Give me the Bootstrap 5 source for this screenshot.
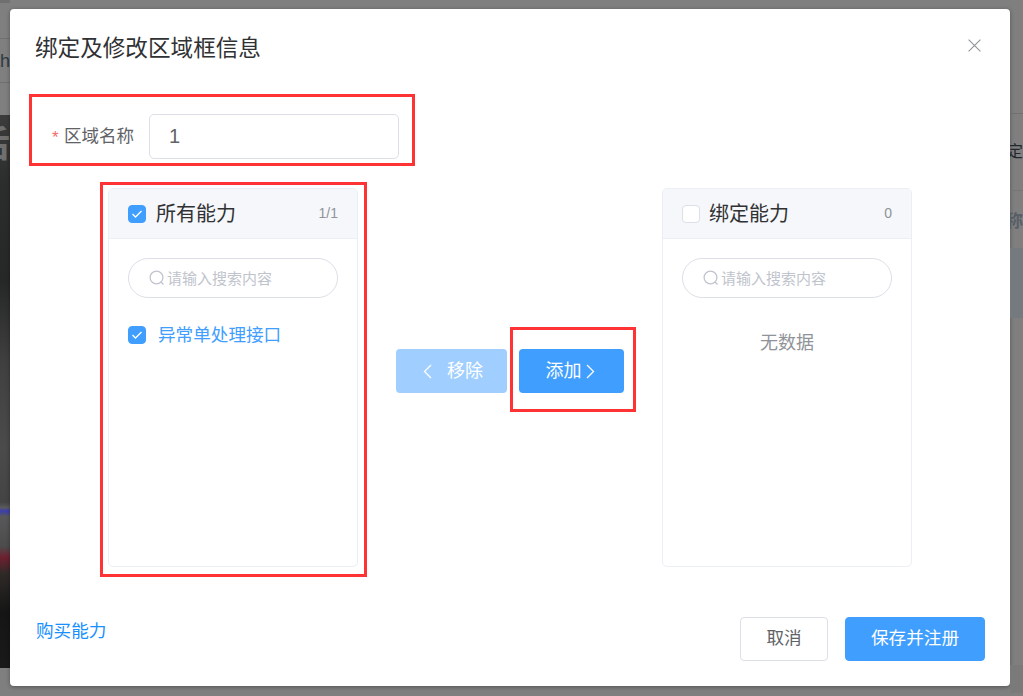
<!DOCTYPE html>
<html lang="zh-CN">
<head>
<meta charset="utf-8">
<title>绑定及修改区域框信息</title>
<link href="https://cdn.jsdelivr.net/npm/bootstrap@5.3.0/dist/css/bootstrap.min.css" rel="stylesheet">
<style>
html,body{height:696px;overflow:hidden}
body{background:#7f7f7f;font-family:"Liberation Sans","Noto Sans CJK SC",sans-serif;color:#606266}
.stage{height:696px}
.strip-l{width:10px;overflow:hidden}
.strip-r{width:13px;overflow:hidden;padding-top:0}
.band-top{height:3px;background:#6f6f6f}
.bg-row{white-space:nowrap;overflow:hidden;border-bottom:1px solid #707070;font-size:18px;line-height:1}
.row-a{height:36px}
.row-th{height:44px;color:#2d3a44}
.row-c{height:32px;border-bottom:0}
.shot{height:553px;background:linear-gradient(180deg,#3c3c3c 0,#2c2e2d 12%,#262827 30%,#3f403f 45%,#4a4b4a 60%,#444 70%,#5a5a5f 71%,#3d3dae 71.6%,#58585a 72.6%,#4c4c4c 78%,#6e2030 80%,#2e2a28 83%,#151515 90%,#1a1a1a 100%);color:#6f6f6f;font-size:36px;font-weight:700;line-height:1;overflow:hidden;padding-top:12px;white-space:nowrap}
.r-a{height:114px}
.r-b{height:77px;color:#23282c;font-size:16px;margin-left:-3px;padding-left:0}
.r-b,.r-c{border-bottom:1px solid #757575}
.r-c{height:57px;color:#575d65;font-size:17px;font-weight:700;margin-left:-4px;border-bottom:0;padding-top:4px}
.r-d{height:70px;background:#747a7e}
.r-e{height:347px}
.r-f{height:28px;background:#7a7a7a}
.dialog{width:1000px;margin-top:9px;height:677px;background:#fff;border-radius:4px;box-shadow:0 1px 4px rgba(0,0,0,.35)}
.dlg-head{height:85px;padding:4px 29px 9px 25px}
.dlg-title{font-size:22.6px;font-weight:400;color:#303133;margin:0;line-height:1.2}
.x-btn{background:none;border:0;padding:0;width:13px;height:13px;display:flex;color:#909399;margin-top:-7px}
.mark-box{border:3px solid #f33}
.name-box{margin-left:19px;width:386px;height:72px;padding:12px 13px 0 20px}
.req{color:#f56c6c;font-size:17px;width:12px;line-height:1;padding-top:2px}
.lbl{font-size:17.5px;color:#606266;width:85px;margin:0;white-space:nowrap}
.name-input{width:250px;height:45px;border:1px solid #dcdfe6;border-radius:5px;padding:0 19px;font-size:20px;color:#606266;box-shadow:none}
.xfer{margin:16px 0 0 90px;height:395px}
.box-a{width:267px;height:395px;padding:3px 6px 7px 5px;flex:none}
.pane{width:250px;height:379px;border:1px solid #ebeef5;border-radius:5px;flex:none;overflow:hidden}
.pane-head{height:50px;background:#f5f7fa;border-bottom:1px solid #ebeef5;padding:0 19px;font-size:17.8px;color:#303133}
.cb{width:18px;height:18px;border-radius:4px;display:inline-flex;align-items:center;justify-content:center;flex:none;border:1px solid #dcdfe6;background:#fff}
.cb.on{background:#409eff;border-color:#409eff}
.pane-title{margin-left:10px;font-size:20px;line-height:1;color:#303133}
.pane-r .pane-title{margin-left:9px}
.cnt{font-size:14px;color:#909399;margin-right:0}
.pane-body{padding:19px 19px 0}
.find{height:40px;border:1px solid #dcdfe6;border-radius:20px;padding:0 0 0 20px}
.find input{border:0;padding:0;margin-left:2px;font-size:15px;height:36px;width:150px;background:none;box-shadow:none;min-width:0}
.find input::placeholder{color:#c0c4cc;opacity:1}
.item{margin-top:28px;color:#409eff;font-size:17.6px;line-height:18px}
.item .txt{margin-left:12px;white-space:nowrap}
.empty{font-size:18px;color:#909399;text-align:center;margin-top:32px;line-height:26px}
.act{height:44px;border:0;border-radius:4px;color:#fff;font-size:18px;line-height:1;padding:0;background:#409eff}
.act:disabled{background:#a0cfff;color:#fff;opacity:1}
.rm{width:111px;margin:167px 0 0 29px;padding-left:3px}
.rm span{margin-left:7px}
.box-b{width:126px;height:85px;margin:145px 0 0 3px;padding:19px 9px 0 6px;flex:none}
.add{width:105px;padding-right:3px}
.pane-r{margin:6px 0 0 26px}
.dlg-foot{padding:40px 25px 0 26px}
.buy{font-size:17.6px;color:#1890ff;text-decoration:none;line-height:28px}
.foot-btn{height:44px;font-size:17.6px;border-radius:4px;padding:0;line-height:1}
.cancel{width:88px;background:#fff;border:1px solid #dcdfe6;color:#606266}
.save{width:140px;background:#409eff;border:1px solid #409eff;color:#fff;margin-left:17px}
</style>
</head>
<body>
<div class="stage d-flex">
  <div class="strip-l flex-none d-flex flex-column">
    <div class="band-top"></div>
    <div class="bg-row row-a"></div>
    <div class="bg-row row-th d-flex justify-content-end align-items-center">th</div>
    <div class="bg-row row-c"></div>
    <div class="shot d-flex justify-content-end">后</div>
  </div>
  <div class="dialog d-flex flex-column flex-shrink-0">
    <div class="dlg-head d-flex align-items-center justify-content-between">
      <h5 class="dlg-title">绑定及修改区域框信息</h5>
      <button class="x-btn" type="button" aria-label="关闭"><svg width="13" height="13" viewBox="0 0 13 13" fill="none" stroke="currentColor" stroke-width="1.1"><path d="M.6.6l11.8 11.8M12.4.6L.6 12.4"/></svg></button>
    </div>
    <div class="mark-box name-box d-flex align-items-center">
      <span class="req">*</span>
      <label class="lbl" for="nm">区域名称</label>
      <input id="nm" class="form-control name-input" value="1">
    </div>
    <div class="xfer d-flex align-items-start">
      <div class="mark-box box-a">
        <div class="pane">
          <div class="pane-head d-flex align-items-center">
            <span class="cb on"><svg width="12" height="10" viewBox="0 0 12 10" fill="none" stroke="#fff" stroke-width="1.3"><path d="M1.5 5l3 3 6-6"/></svg></span>
            <span class="pane-title">所有能力</span>
            <span class="cnt ms-auto">1/1</span>
          </div>
          <div class="pane-body">
            <div class="find d-flex align-items-center">
              <svg width="16" height="16" viewBox="0 0 16 16" fill="none" stroke="#c0c4cc" stroke-width="1.3"><circle cx="7.5" cy="7.5" r="6.4"/><path d="M12 12l2.5 2.5"/></svg>
              <input class="form-control" placeholder="请输入搜索内容">
            </div>
            <div class="item d-flex align-items-center">
              <span class="cb on"><svg width="12" height="10" viewBox="0 0 12 10" fill="none" stroke="#fff" stroke-width="1.3"><path d="M1.5 5l3 3 6-6"/></svg></span>
              <span class="txt">异常单处理接口</span>
            </div>
          </div>
        </div>
      </div>
      <button class="btn act rm d-inline-flex align-items-center justify-content-center" type="button" disabled>
        <svg width="9" height="15" viewBox="0 0 9 15" fill="none" stroke="#fff" stroke-width="1.3" class="me-2"><path d="M8 1L1.5 7.5 8 14"/></svg><span>移除</span>
      </button>
      <div class="mark-box box-b">
        <button class="btn act add d-inline-flex align-items-center justify-content-center" type="button">
          <span>添加</span><svg width="9" height="15" viewBox="0 0 9 15" fill="none" stroke="#fff" stroke-width="1.3" class="ms-1"><path d="M1 1l6.5 6.5L1 14"/></svg>
        </button>
      </div>
      <div class="pane pane-r">
        <div class="pane-head d-flex align-items-center">
          <span class="cb"></span>
          <span class="pane-title">绑定能力</span>
          <span class="cnt ms-auto">0</span>
        </div>
        <div class="pane-body">
          <div class="find d-flex align-items-center">
            <svg width="16" height="16" viewBox="0 0 16 16" fill="none" stroke="#c0c4cc" stroke-width="1.3"><circle cx="7.5" cy="7.5" r="6.4"/><path d="M12 12l2.5 2.5"/></svg>
            <input class="form-control" placeholder="请输入搜索内容">
          </div>
          <div class="empty">无数据</div>
        </div>
      </div>
    </div>
    <div class="dlg-foot d-flex justify-content-between align-items-start">
      <a class="buy" href="#">购买能力</a>
      <div class="d-flex">
        <button class="btn foot-btn cancel" type="button">取消</button>
        <button class="btn foot-btn save" type="button">保存并注册</button>
      </div>
    </div>
  </div>
  <div class="strip-r flex-none d-flex flex-column">
    <div class="bg-row r-a"></div>
    <div class="bg-row r-b d-flex align-items-center">定</div>
    <div class="bg-row r-c d-flex align-items-center">称</div>
    <div class="r-d"></div>
    <div class="r-e"></div>
    <div class="r-f"></div>
  </div>
</div>
</body>
</html>
